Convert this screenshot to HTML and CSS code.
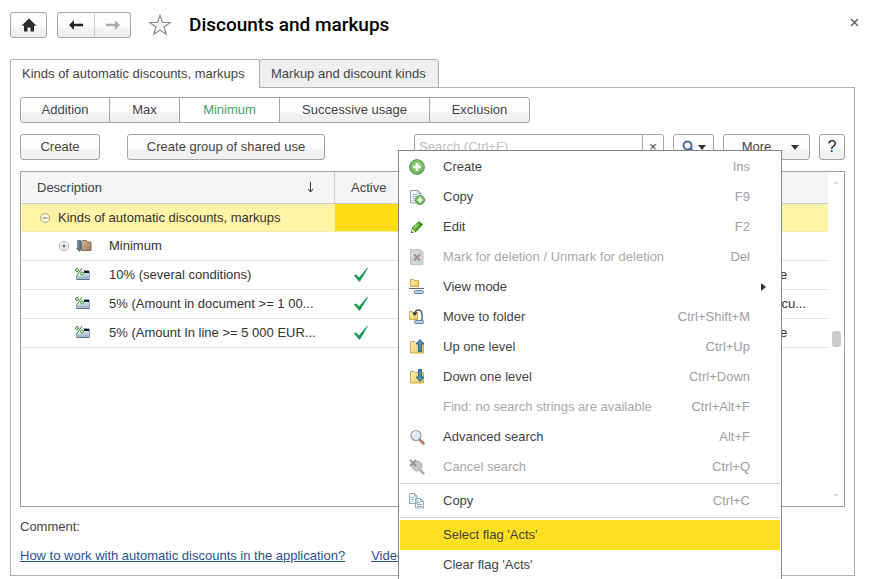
FILE: index.html
```html
<!DOCTYPE html>
<html lang="en">
<head>
<meta charset="utf-8">
<meta name="viewport" content="width=device-width, initial-scale=1">
<title>Discounts and markups</title>
<link rel="stylesheet" href="styles.css">
</head>
<body>
<svg class="defs" aria-hidden="true">
  <defs>
    <linearGradient id="folder" x1="0" y1="0" x2="1" y2="1"><stop offset="0" stop-color="#fff3b8"/><stop offset="1" stop-color="#ecc452"/></linearGradient>
    <linearGradient id="brown" x1="0" y1="0" x2="1" y2="1"><stop offset="0" stop-color="#d9b9a0"/><stop offset="1" stop-color="#a07a5c"/></linearGradient>
    <linearGradient id="card" x1="0" y1="0" x2="0" y2="1"><stop offset="0" stop-color="#eaf2f8"/><stop offset="1" stop-color="#94b0c6"/></linearGradient>
    <radialGradient id="green" cx=".5" cy=".4" r=".6"><stop offset="0" stop-color="#a6dc80"/><stop offset="1" stop-color="#62ac4c"/></radialGradient>
    <symbol id="i-discount" viewBox="0 0 16 14">
      <rect x="1.500" y="2.500" width="13" height="9" rx="1" fill="url(#card)" stroke="#8ba0b2"/>
      <path d="M9 3h5v2H9z" fill="#152029"/><path d="M1.500 11.500h13" stroke="#5a7892"/>
      <path d="M0 0h8.500v7.500H0z" fill="#fff" opacity=".8"/>
      <path d="M7 0L2 7.500" stroke="#3c8a2c"/><circle cx="2" cy="2" r="1.500" fill="none" stroke="#3c8a2c"/><circle cx="7" cy="5.500" r="1.500" fill="none" stroke="#3c8a2c"/>
    </symbol>
    <symbol id="i-check" viewBox="0 0 14 14"><path d="M0 7.500l2-1 3 3L13 0h1L6 13.500H5z" fill="#159a50"/></symbol>
  </defs>
</svg>
<div class="page">
  <header class="header">
    <button class="btn home" aria-label="Home"><svg width="16" height="14" viewBox="0 0 16 14"><path d="M8 .5l7.500 7.200H13V13.500H9.500V9.500h-3v4H3V7.700H.5z" fill="#2b2b2b"/></svg></button>
    <div class="history">
      <button class="btn" aria-label="Back"><svg width="16" height="12" viewBox="0 0 16 12"><path d="M1 6l5-5v3.800h9v2.400H6V11z" fill="#222"/></svg></button>
      <button class="btn" aria-label="Forward"><svg width="16" height="12" viewBox="0 0 16 12"><path d="M15 6l-5-5v3.800H1v2.400h9V11z" fill="#aaa"/></svg></button>
    </div>
    <button class="plain star" aria-label="Add to favorites"><svg width="24" height="22" viewBox="0 0 24 22"><path d="M12 1.500l2.500 7h7.700l-6.200 4.500 2.300 7.300L12 16l-6.300 4.300L8 13 1.800 8.500h7.700z" fill="#fff" stroke="#8c8c8c" stroke-width="1.200"/></svg></button>
    <h1 class="title">Discounts and markups</h1>
    <button class="plain close" aria-label="Close"><svg width="9" height="9" viewBox="0 0 9 9"><path d="M1 1l7 7M8 1L1 8" stroke="#555" stroke-width="1.300"/></svg></button>
  </header>

  <nav class="tabs" role="tablist">
    <button class="tab active" role="tab" aria-selected="true">Kinds of automatic discounts, markups</button>
    <button class="tab" role="tab" aria-selected="false">Markup and discount kinds</button>
  </nav>

  <main class="panel">
    <div class="segments">
      <button class="btn">Addition</button>
      <button class="btn">Max</button>
      <button class="btn current">Minimum</button>
      <button class="btn">Successive usage</button>
      <button class="btn">Exclusion</button>
    </div>

    <div class="toolbar">
      <button class="btn create">Create</button>
      <button class="btn group">Create group of shared use</button>
      <div class="search">
        <input type="text" aria-label="Search" placeholder="Search (Ctrl+F)">
        <button class="plain" aria-label="Clear search">×</button>
      </div>
      <button class="btn find" aria-label="Find"><svg width="13" height="14" viewBox="0 0 13 14"><circle cx="5.500" cy="5.500" r="4" fill="none" stroke="#4a6f9c" stroke-width="2"/><path d="M8.500 8.500l4 4.500" stroke="#4a6f9c" stroke-width="2.500"/></svg><i class="caret"></i></button>
      <button class="btn more"><span>More</span><i class="caret"></i></button>
      <button class="btn help" aria-label="Help">?</button>
    </div>

    <div class="list">
      <div class="grid">
        <table>
          <colgroup><col class="c-name"><col class="c-active"><col><col class="c-area"></colgroup>
          <thead>
            <tr><th scope="col"><div class="head"><span>Description</span><svg width="7" height="11" viewBox="0 0 7 11"><path d="M3.500 0v10M1 7l2.500 3L6 7" fill="none" stroke="#333"/></svg></div></th><th scope="col">Active</th><th></th><th></th></tr>
          </thead>
          <tbody>
            <tr class="selected"><td><div class="cell root"><svg width="10" height="10" viewBox="0 0 10 10"><circle cx="5" cy="5" r="4.500" fill="#fff" fill-opacity=".6" stroke="#a8a37a"/><path d="M2.500 5h5" stroke="#666"/></svg><span>Kinds of automatic discounts, markups</span></div></td><td class="focus"></td><td></td><td></td></tr>
            <tr><td><div class="cell folder"><svg width="10" height="10" viewBox="0 0 10 10"><circle cx="5" cy="5" r="4.500" fill="#fff" stroke="#aaa"/><path d="M2.500 5h5M5 2.500v5" stroke="#666"/></svg><svg width="16" height="14" viewBox="0 0 16 14"><path d="M5.500 2.500l1-1h4l1 1.500h3.500v8.500H5.500z" fill="url(#brown)" stroke="#8c684c"/><path d="M1 1h4v8h1.500L3.200 13 0 9h1z" fill="#58748c"/><path d="M2 1v8" stroke="#8ba4b8"/></svg><span>Minimum</span></div></td><td></td><td></td><td></td></tr>
            <tr><td><div class="cell item"><svg width="16" height="14"><use href="#i-discount"/></svg><span>10% (several conditions)</span></div></td><td class="tick"><svg width="14" height="14"><use href="#i-check"/></svg></td><td></td><td>line</td></tr>
            <tr><td><div class="cell item"><svg width="16" height="14"><use href="#i-discount"/></svg><span>5% (Amount in document &gt;= 1 00...</span></div></td><td class="tick"><svg width="14" height="14"><use href="#i-check"/></svg></td><td></td><td>docu...</td></tr>
            <tr><td><div class="cell item"><svg width="16" height="14"><use href="#i-discount"/></svg><span>5% (Amount In line &gt;= 5 000 EUR...</span></div></td><td class="tick"><svg width="14" height="14"><use href="#i-check"/></svg></td><td></td><td>line</td></tr>
          </tbody>
        </table>
      </div>
      <div class="scroll" aria-hidden="true"><i class="up"></i><i class="thumb"></i><i class="down"></i></div>
    </div>

    <div class="comment">Comment:</div>
    <div class="links"><a href="#help">How to work with automatic discounts in the application?</a><a href="#video">Video</a></div>
  </main>

  <div class="menu" role="menu">
    <button role="menuitem"><svg width="16" height="16" viewBox="0 0 16 16"><circle cx="8" cy="8" r="7.400" fill="url(#green)" stroke="#5d9a55"/><path d="M8 4v8M4 8h8" stroke="#fff" stroke-width="2.600"/></svg><span>Create</span><kbd>Ins</kbd></button>
    <button role="menuitem"><svg width="16" height="16" viewBox="0 0 16 16"><path d="M1.500 1.500h7.500l3 3v9.500H1.500z" fill="#eef5fa" stroke="#8ba5b8"/><path d="M9 1.500v3h3" fill="none" stroke="#8ba5b8"/><path d="M3.500 5.500h5M3.500 7.500h6M3.500 9.500h4M3.500 11.500h3" stroke="#9db4c4"/><circle cx="11" cy="11" r="4.500" fill="url(#green)" stroke="#5d9a55"/><path d="M11 8.500v5M8.500 11h5" stroke="#fff" stroke-width="1.600"/></svg><span>Copy</span><kbd>F9</kbd></button>
    <button role="menuitem"><svg width="16" height="16" viewBox="0 0 16 16"><path d="M2.500 13.500l1-4.500L10 2.500l3.500 3L7 12.500z" fill="#50ad27" stroke="#347a1b"/><path d="M5 9.500l5.500-6" stroke="#a0df70" stroke-width="1.500"/><path d="M2 14l1-4.500L6.500 13z" fill="#f0dfa8"/><path d="M2 14l.5-2L4 13.500z" fill="#222"/><path d="M9 3.500l3.500 3" stroke="#2a6c18"/></svg><span>Edit</span><kbd>F2</kbd></button>
    <button role="menuitem" disabled><svg width="16" height="16" viewBox="0 0 16 16"><path d="M1.500 .5h10l2.500 2.500v12.500H1.500z" fill="#d2d5d8" stroke="#c2c6ca"/><path d="M11.500 .5v2.500H14" fill="#eee" stroke="#bbb"/><path d="M5 5.500l6 6M11 5.500l-6 6" stroke="#a58d8d" stroke-width="2"/></svg><span>Mark for deletion / Unmark for deletion</span><kbd>Del</kbd></button>
    <button role="menuitem" aria-haspopup="menu"><svg width="16" height="16" viewBox="0 0 16 16"><path d="M1.500 .5h3l1 1h4v6h-8z" fill="url(#folder)" stroke="#d0a94b"/><path d="M0 9.500h15" stroke="#5b6770"/><rect x="5.500" y="11.500" width="9" height="3" rx="1" fill="#b7d0e4" stroke="#6284a0"/></svg><span>View mode</span><i class="submenu"></i></button>
    <button role="menuitem"><svg width="16" height="16" viewBox="0 0 16 16"><path d="M.5 2.500h3l1 1h4v7h-8z" fill="url(#folder)" stroke="#d0a94b"/><rect x="5.500" y="11.500" width="9" height="3" rx="1" fill="#b7d0e4" stroke="#6284a0"/><path d="M13 11.500V5Q12.500 .8 9.500 .8Q6.500 .8 6 4" fill="none" stroke="#37566f" stroke-width="1.300"/><path d="M3 3.500h5.500L5.700 7z" fill="#263d50"/></svg><span>Move to folder</span><kbd>Ctrl+Shift+M</kbd></button>
    <button role="menuitem"><svg width="16" height="16" viewBox="0 0 16 16"><path d="M1.500 2.500h4l1 1h8v10.500h-13z" fill="url(#folder)" stroke="#d0a94b"/><path d="M9.500 12.500V5H7.200L11 .5 14.800 5h-2.300v7.500z" fill="#4a91b7" stroke="#2c6685"/></svg><span>Up one level</span><kbd>Ctrl+Up</kbd></button>
    <button role="menuitem"><svg width="16" height="16" viewBox="0 0 16 16"><path d="M1.500 2.500h4l1 1h8v10.500h-13z" fill="url(#folder)" stroke="#d0a94b"/><path d="M9.500 .5v7.500H7.200L11 12.500 14.800 8h-2.300V.5z" fill="#4a91b7" stroke="#2c6685"/></svg><span>Down one level</span><kbd>Ctrl+Down</kbd></button>
    <button role="menuitem" disabled><svg width="16" height="16"></svg><span>Find: no search strings are available</span><kbd>Ctrl+Alt+F</kbd></button>
    <button role="menuitem"><svg width="16" height="16" viewBox="0 0 16 16"><path d="M10.500 10.500l4 4" stroke="#b07c58" stroke-width="2.500" stroke-linecap="round"/><circle cx="7" cy="6.500" r="5" fill="#d8ebf8" stroke="#a59a98" stroke-width="1.200"/><path d="M4 6q.5-3 3-3" fill="none" stroke="#fff" stroke-width="1.500"/></svg><span>Advanced search</span><kbd>Alt+F</kbd></button>
    <button role="menuitem" disabled><svg width="16" height="16" viewBox="0 0 16 16"><path d="M10.500 10.500l4 4" stroke="#b5aeaa" stroke-width="2.500" stroke-linecap="round"/><circle cx="8" cy="7" r="5" fill="#c4c7cb" stroke="#b4b4b4"/><path d="M1 1l6 6M7 1L1 7" stroke="#a39090" stroke-width="1.800"/></svg><span>Cancel search</span><kbd>Ctrl+Q</kbd></button>
    <hr>
    <button role="menuitem"><svg width="16" height="16" viewBox="0 0 16 16"><path d="M.5 .5h5l2.500 2.500v7.500H.5zM6.500 5.500h5l3 3v6.500h-8z" fill="#edf5fb" stroke="#94adbf"/><path d="M5.500 .5v2.500H8M11.500 5.500v3h3M2 4.500h3M2 6.500h3M8 9.500h3M8 11.500h5M8 13.500h5" fill="none" stroke="#94adbf"/></svg><span>Copy</span><kbd>Ctrl+C</kbd></button>
    <hr>
    <button role="menuitem" class="hover"><svg width="16" height="16"></svg><span>Select flag 'Acts'</span></button>
    <button role="menuitem"><svg width="16" height="16"></svg><span>Clear flag 'Acts'</span></button>
  </div>
</div>
</body>
</html>
```
FILE: styles.css
```css
* { box-sizing: border-box; }
body, button, input {
  font-family: "Liberation Sans", Arial, sans-serif;
  font-size: 13px;
  line-height: 16px;
  color: #444;
}
body { margin: 0; background: #fff; overflow: hidden; }
button, input { margin: 0; padding: 0; }
svg { display: block; flex: none; }
.defs { position: absolute; width: 0; height: 0; }

.page {
  position: relative;
  display: flex;
  flex-direction: column;
  height: 100vh;
  padding: 12px 14px 3px 10px;
  overflow: hidden;
}

.btn {
  display: flex;
  align-items: center;
  justify-content: center;
  height: 26px;
  border: 1px solid #a6a6a6;
  border-radius: 3px;
  background: linear-gradient(#fff 0, #fcfcfc 60%, #f3f3f3 61%, #eee 100%);
}
.plain { border: 0; background: none; }

/* header */
.header { display: flex; align-items: center; height: 26px; }
.home { width: 37px; }
.history { display: flex; margin-left: 10px; }
.history .btn { width: 38px; border-radius: 3px 0 0 3px; }
.history .btn + .btn { width: 37px; margin-left: -1px; border-left-color: #ccc; border-radius: 0 3px 3px 0; }
.star { margin-left: 17px; }
.title { margin: 0 0 0 17px; font-family: Roboto, sans-serif; font-size: 19px; line-height: 26px; font-weight: 500; color: #000; }
.close { margin: 0 -4px 6px auto; }

/* tabs */
.tabs { display: flex; margin-top: 21px; position: relative; }
.tab {
  height: 29px;
  padding: 0 11px;
  border: 1px solid #b0b0b0;
  border-radius: 3px 3px 0 0;
  background: #efefef;
  text-align: left;
}
.tab + .tab { margin-left: -1px; }
.tab.active { min-width: 250px; background: #fff; border-bottom-color: #fff; }
.tab:last-child { min-width: 180px; }

.panel {
  display: flex;
  flex: 1;
  flex-direction: column;
  min-height: 0;
  margin-top: -1px;
  padding: 9px 9px 11px;
  border: 1px solid #b0b0b0;
}
.segments { display: flex; }
.segments .btn { width: 101px; margin-left: -1px; border-radius: 0; }
.segments .btn:first-child { width: 90px; margin-left: 0; border-radius: 3px 0 0 3px; }
.segments .btn:nth-child(2) { width: 71px; }
.segments .btn:nth-child(4) { width: 151px; }
.segments .btn:last-child { border-radius: 0 3px 3px 0; }
.segments .current { background: #fff; color: #42a06a; }

/* toolbar */
.toolbar { display: flex; gap: 9px; margin-top: 11px; }
.create { width: 80px; margin-right: 18px; }
.group { width: 198px; }
.search { display: flex; width: 250px; height: 26px; margin-left: auto; border: 1px solid #a6a6a6; border-radius: 3px; }
.search input { flex: 1; min-width: 0; padding: 0 4px; border: 0; background: none; outline: 0; }
.search input::placeholder { color: #c0c0c0; opacity: 1; }
.search .plain { width: 21px; border-left: 1px solid #a6a6a6; }
.find { width: 41px; gap: 3px; }
.more { width: 87px; gap: 20px; padding-left: 8px; }
.help { width: 26px; font-size: 16px; color: #222; }
.caret { border: 4px solid transparent; border-top: 5px solid #333; border-bottom: 0; }

/* list */
.list { display: flex; flex: 1; min-height: 0; margin-top: 11px; border: 1px solid #a0a0a0; }
.grid { flex: 1; min-width: 0; }
.scroll { display: flex; flex-direction: column; align-items: center; width: 16px; padding: 9px 0; }
.up { border: 3px solid transparent; border-bottom: 3px solid #ddd; border-top: 0; }
.down { border: 3px solid transparent; border-top: 3px solid #ddd; border-bottom: 0; margin-top: auto; }
.thumb { width: 9px; height: 16px; margin-top: 147px; border-radius: 3px; background: #ccc; }
table { width: 100%; table-layout: fixed; border-collapse: separate; border-spacing: 0; }
.c-name { width: 314px; }
.c-active { width: 64px; }
.c-area { width: 65px; }
th { height: 32px; padding: 0 0 0 16px; border-bottom: 1px solid #ccc; background: #f5f5f5; text-align: left; font-weight: 400; white-space: nowrap; }
th:first-child { border-right: 1px solid #ccc; }
.head { display: flex; align-items: center; justify-content: space-between; padding-right: 20px; }
td { height: 29px; padding: 0; border-bottom: 1px solid #e2e2e2; color: #333; white-space: nowrap; }
td:last-child { padding-left: 4px; }
.selected td { height: 28px; border-color: #f0e9b0; background: #fff4a5; }
.selected .focus { background: #ffdc18; }
.cell { display: flex; align-items: center; }
.root { gap: 8px; padding-left: 19px; }
.folder { gap: 7px; padding-left: 38px; }
.folder span { margin-left: 10px; }
.item { gap: 18px; padding-left: 54px; }
.tick { padding-left: 19px; }

.comment { margin-top: 12px; }
.links { display: flex; gap: 26px; margin-top: 13px; }
.links a { color: #1f5496; }

/* context menu */
.menu {
  position: absolute;
  top: 150px;
  right: 87px;
  width: 384px;
  padding: 1px 1px 8px;
  border: 1px solid #858585;
  background: #fff;
}
.menu button {
  display: flex;
  align-items: center;
  width: 100%;
  height: 30px;
  padding: 0 30px 0 9px;
  border: 0;
  background: none;
  text-align: left;
}
.menu span { margin-left: 18px; }
.menu kbd { margin-left: auto; font: inherit; color: #a0a0a0; }
.menu button:disabled { color: #a8a8a8; }
.menu hr { height: 1px; margin: 1px 0 2px; border: 0; background: #d2d2ce; }
.menu .hover { background: #ffe021; }
.submenu { margin: 0 -16px 0 auto; border: 4px solid transparent; border-left: 5px solid #333; border-right: 0; }
```
